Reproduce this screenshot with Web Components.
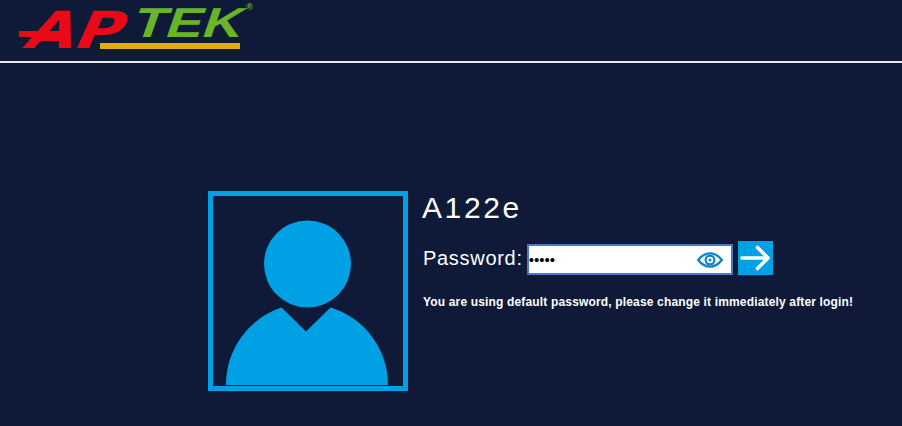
<!DOCTYPE html>
<html>
<head>
<meta charset="utf-8">
<title>Login</title>
<style>
html, body { margin: 0; height: 100%; background: #0f1a39; overflow: hidden; }
body { font-family: "Liberation Sans", Arial, sans-serif; color: #fff; }
</style>
</head>
<body>
<app-header></app-header>
<login-panel user="A122e"></login-panel>

<script>
class AppHeader extends HTMLElement {
    constructor() {
        super();
        this.attachShadow({ mode: "open" });
    }

    connectedCallback() {
        this.shadowRoot.innerHTML = `
            <style>
                :host { display: block; height: 61px; border-bottom: 2px solid #e6e6e6; box-sizing: content-box; overflow: hidden; }
                svg { display: block; }
                text { font-weight: bold; }
            </style>
            <svg width="270" height="61" viewBox="0 0 270 61">
                <rect x="19" y="31" width="40" height="6" fill="#ea0a17"/>
                <text transform="translate(22 48) skewX(-24)" font-family="DejaVu Sans" font-size="51" fill="#ea0a17" textLength="96" lengthAdjust="spacingAndGlyphs">AP</text>
                <text transform="translate(130 37) skewX(-19) scale(1 1.1)" font-family="Liberation Sans" font-size="38" fill="#6ab42a" textLength="109" lengthAdjust="spacingAndGlyphs">TEK</text>
                <rect x="100" y="43" width="140" height="6" fill="#e5ac0a"/>
                <text x="246" y="10" font-family="Liberation Sans" font-size="9" font-weight="normal" fill="#6ab42a">®</text>
            </svg>
        `;
    }
}

class UserAvatar extends HTMLElement {
    constructor() {
        super();
        this.attachShadow({ mode: "open" });
    }

    connectedCallback() {
        this.shadowRoot.innerHTML = `
            <style>
                :host { display: block; flex: none; width: 200px; height: 200px; box-sizing: border-box; border: 5.5px solid #00a1e4; }
                svg { display: block; }
            </style>
            <svg width="189" height="189" viewBox="213.5 196.5 189 189">
                <circle cx="308" cy="264.5" r="43.5" fill="#00a1e4"/>
                <path d="M226.5 386 A81 81 0 0 1 282 308 L306.5 332 L331 308 A81 81 0 0 1 388.5 386 Z" fill="#00a1e4"/>
            </svg>
        `;
    }
}

class PasswordField extends HTMLElement {
    constructor() {
        super();
        this.attachShadow({ mode: "open" });
    }

    connectedCallback() {
        this.shadowRoot.innerHTML = `
            <style>
                :host { display: flex; align-items: center; }
                label { font-size: 20px; letter-spacing: 0.7px; margin-right: 4px; color: #fff; }
                .box { display: flex; align-items: center; width: 206px; height: 31px; box-sizing: border-box; margin-top: 3px; background: #fff; border: 2px solid #4a78c8; padding: 0 8px 0 0; }
                input { flex: 1; min-width: 0; border: 0; outline: 0; padding: 0; background: none; font: 15px "Liberation Sans", Arial, sans-serif; color: #000; }
                .eye { display: block; flex: none; }
                .go { display: flex; align-items: center; justify-content: center; width: 35px; height: 34px; margin-left: 5px; background: #00a1e4; }
            </style>
            <label>Password:</label>
            <div class="box">
                <input type="password" value="12345">
                <svg class="eye" width="26" height="16" viewBox="0 0 26 16">
                    <path d="M1.2 8 C5 3 9 1.4 13 1.4 C17 1.4 21 3 24.8 8 C21 13 17 14.6 13 14.6 C9 14.6 5 13 1.2 8 Z" fill="none" stroke="#0f86c9" stroke-width="2.4"/>
                    <circle cx="13" cy="8" r="4.4" fill="none" stroke="#0f86c9" stroke-width="2.2"/>
                    <circle cx="13" cy="8" r="1.5" fill="#0f86c9"/>
                </svg>
            </div>
            <div class="go">
                <svg width="31" height="26" viewBox="0 0 31 26">
                    <path d="M2 13 H28 M17.5 2.5 L28 13 L17.5 23.5" fill="none" stroke="#fff" stroke-width="3.6" stroke-linecap="round" stroke-linejoin="round"/>
                </svg>
            </div>
        `;
    }
}

class LoginPanel extends HTMLElement {
    constructor() {
        super();
        this.attachShadow({ mode: "open" });
    }

    connectedCallback() {
        this.shadowRoot.innerHTML = `
            <style>
                :host { display: flex; gap: 14px; padding: 128px 0 0 208px; }
                .info { display: flex; flex-direction: column; }
                h1 { margin: 0; font-size: 30px; line-height: 34px; font-weight: normal; letter-spacing: 2.6px; }
                password-field { margin-top: 16px; margin-left: 1px; }
                p { margin: 20px 0 0 1px; font-size: 12px; line-height: 14px; font-weight: bold; letter-spacing: 0.16px; white-space: nowrap; }
            </style>
            <user-avatar></user-avatar>
            <div class="info">
                <h1>${this.getAttribute("user") || ""}</h1>
                <password-field></password-field>
                <p>You are using default password, please change it immediately after login!</p>
            </div>
        `;
    }
}

customElements.define("app-header", AppHeader);
customElements.define("user-avatar", UserAvatar);
customElements.define("password-field", PasswordField);
customElements.define("login-panel", LoginPanel);
</script>
</body>
</html>
